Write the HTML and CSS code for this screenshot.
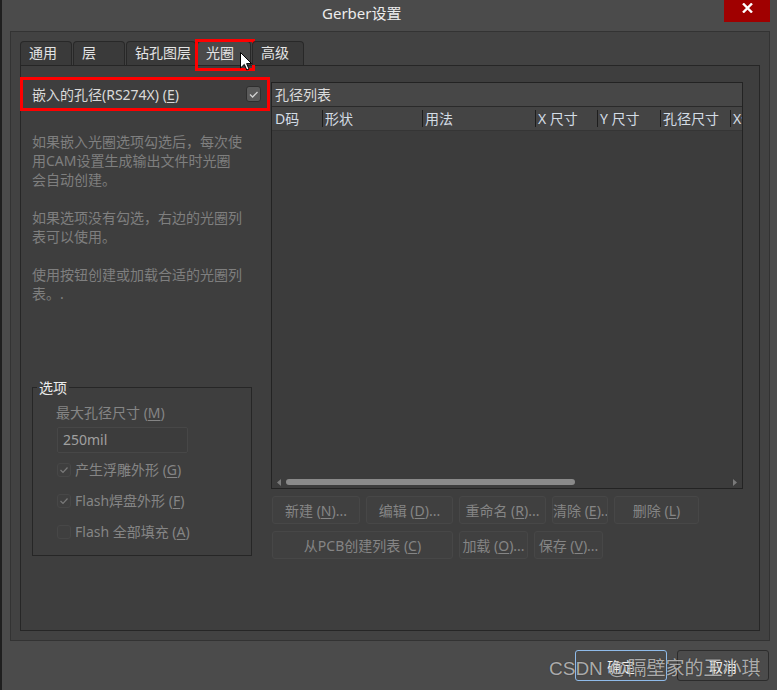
FILE: index.html
```html
<!DOCTYPE html>
<html lang="zh-CN">
<head>
<meta charset="utf-8">
<title>Gerber设置</title>
<link rel="stylesheet" href="styles.css">
</head>
<body>
<div class="window">
  <header class="titlebar">
    <span class="title">Gerber设置</span>
    <button class="close" aria-label="关闭">
      <svg width="11" height="10" viewBox="0 0 11 10"><path d="M1 0.5 L10 9.5 M10 0.5 L1 9.5" stroke="#fff" stroke-width="2.4" fill="none"/></svg>
    </button>
  </header>

  <div class="outer">
    <nav class="tabs">
      <span class="tab w52">通用</span>
      <span class="tab w52">层</span>
      <span class="tab w70">钻孔图层</span>
      <span class="tab w54 active">光圈<span class="annot"></span></span>
      <span class="tab w52">高级</span>
    </nav>

    <section class="page">
      <div class="left">
        <div class="embed">
          <span>嵌入的孔径(RS274X) (<u>E</u>)</span>
          <span class="cb cb-main"><svg width="11" height="9" viewBox="0 0 11 9"><path d="M2 4.5 L4.6 7 L9.5 2" stroke="#d2d2d2" stroke-width="1.3" fill="none"/></svg></span>
        </div>
        <div class="desc">
          <p>如果嵌入光圈选项勾选后，每次使<br>用CAM设置生成输出文件时光圈<br>会自动创建。</p>
          <p>如果选项没有勾选，右边的光圈列<br>表可以使用。</p>
          <p>使用按钮创建或加载合适的光圈列<br>表。.</p>
        </div>
        <div class="options">
          <div class="group-title">选项</div>
          <div class="opt-label">最大孔径尺寸 (<u>M</u>)</div>
          <div class="field">250mil</div>
          <div class="check-row first"><span class="cb cb-dis"><svg width="10" height="8" viewBox="0 0 10 8"><path d="M1.5 4 L4 6.5 L8.5 1.5" stroke="#7a7a7a" stroke-width="1.2" fill="none"/></svg></span><span>产生浮雕外形 (<u>G</u>)</span></div>
          <div class="check-row"><span class="cb cb-dis"><svg width="10" height="8" viewBox="0 0 10 8"><path d="M1.5 4 L4 6.5 L8.5 1.5" stroke="#7a7a7a" stroke-width="1.2" fill="none"/></svg></span><span>Flash焊盘外形 (<u>F</u>)</span></div>
          <div class="check-row"><span class="cb cb-dis"></span><span>Flash 全部填充 (<u>A</u>)</span></div>
        </div>
      </div>

      <div class="right">
        <div class="list">
          <div class="list-title">孔径列表</div>
          <div class="list-head">
            <span class="col c1">D码</span>
            <span class="col c2">形状</span>
            <span class="col c3">用法</span>
            <span class="col c4">X 尺寸</span>
            <span class="col c5">Y 尺寸</span>
            <span class="col c6">孔径尺寸</span>
            <span class="col c7">X偏移</span>
          </div>
          <div class="list-body"></div>
          <div class="hscroll">
            <svg class="arr-l" width="4" height="7" viewBox="0 0 4 7"><path d="M4 0 L0 3.5 L4 7 Z" fill="#7a7a7a"/></svg>
            <span class="thumb"></span>
            <svg class="arr-r" width="4" height="7" viewBox="0 0 4 7"><path d="M0 0 L4 3.5 L0 7 Z" fill="#7a7a7a"/></svg>
          </div>
        </div>
        <div class="btn-row">
          <button class="btn b88">新建 (<u>N</u>)...</button>
          <button class="btn b87">编辑 (<u>D</u>)...</button>
          <button class="btn b87">重命名 (<u>R</u>)...</button>
          <button class="btn b56">清除 (<u>E</u>)..</button>
          <button class="btn b85">删除 (<u>L</u>)</button>
        </div>
        <div class="btn-row">
          <button class="btn b181">从PCB创建列表 (<u>C</u>)</button>
          <button class="btn b69">加载 (<u>O</u>)...</button>
          <button class="btn b69">保存 (<u>V</u>)...</button>
        </div>
      </div>
    </section>
  </div>

  <footer class="footer">
    <button class="dlg-btn ok">确定</button>
    <button class="dlg-btn">取消</button>
  </footer>

  <div class="watermark">CSDN @隔壁家的王小琪</div>

  <svg class="cursor" width="13" height="19" viewBox="0 0 13 19"><path d="M0.5 0.5 L0.5 16 L4.3 12.4 L6.8 18 L9 17 L6.6 11.6 L11.6 11.6 Z" fill="#fff" stroke="#000" stroke-width="1"/></svg>
</div>
</body>
</html>
```

FILE: styles.css
```css
body {
  margin: 0;
  background: #4b4b4b;
  font-family: "Noto Sans", "Noto Sans CJK SC", sans-serif;
  font-size: 14px;
}

u { text-decoration-thickness: 1px; text-underline-offset: 2px; }

.window {
  position: relative;
  width: 777px;
  height: 690px;
  box-sizing: border-box;
  border-left: 2px solid #1f1f1f;
  background: #4b4b4b;
  overflow: hidden;
}

/* title bar */
.titlebar {
  height: 31px;
  display: flex;
  align-items: flex-start;
}
.title {
  margin-left: 320px;
  margin-top: 3px;
  font-size: 15px;
  line-height: 20px;
  color: #ececec;
}
.close {
  margin-left: auto;
  margin-right: 7px;
  width: 46px;
  height: 22px;
  border: 0;
  padding: 3px 0 0;
  background: #a00000;
  display: flex;
  justify-content: center;
  align-items: flex-start;
}

/* outer panel */
.outer {
  margin-left: 8px;
  width: 760px;
  height: 610px;
  box-sizing: border-box;
  border: 1px solid #333;
  background: #424242;
  padding: 9px 9px 9px 9px;
  display: flex;
  flex-direction: column;
}

.tabs {
  display: flex;
  gap: 1px;
  height: 24px;
}
.tab {
  position: relative;
  box-sizing: border-box;
  height: 24px;
  border: 1px solid #282828;
  border-bottom: 0;
  border-radius: 4px 4px 0 0;
  background: #3a3a3a;
  color: #e4e4e4;
  padding-left: 8px;
  line-height: 22px;
}
.tab.active { background: #4a4a4a; }
.w52 { width: 52px; }
.w54 { width: 54px; }
.w70 { width: 70px; }
.annot {
  position: absolute;
  left: -3px;
  top: -3px;
  width: 60px;
  height: 32px;
  box-sizing: border-box;
  border: 3px solid #f00;
}

.page {
  flex: 1;
  border: 1px solid #262626;
  background: #3e3e3e;
  display: grid;
  grid-template-columns: 250px 472px;
  align-content: start;
}

/* left column */
.embed {
  margin: 14px 4px 0 2px;
  height: 28px;
  display: flex;
  align-items: center;
  justify-content: space-between;
  padding: 0 6px 0 9px;
  outline: 3px solid #f00;
  color: #dadada;
}

.cb {
  box-sizing: border-box;
  display: grid;
  place-items: center;
  border-radius: 3px;
}
.cb-main {
  width: 15px;
  height: 16px;
  border: 1px solid #2f2f2f;
  background: #5a5a5a;
}
.cb-dis {
  width: 14px;
  height: 14px;
  border: 1px solid #474747;
  background: #3f3f3f;
}

.desc {
  margin: 24px 0 0 11px;
  color: #7f7f7f;
  line-height: 19px;
}
.desc p { margin: 0 0 19px; }
.desc p:last-child { margin-bottom: 0; }

.options {
  margin: 84px 0 0 11px;
  width: 220px;
  box-sizing: border-box;
  border: 1px solid #262626;
  padding: 0 0 13px 23px;
  color: #858585;
}
.group-title {
  width: fit-content;
  margin: -10px 0 0 -19px;
  padding: 0 2px;
  line-height: 20px;
  background: #3e3e3e;
  color: #ececec;
}
.opt-label {
  margin-top: 5px;
  line-height: 20px;
}
.field {
  margin: 4px 0 0 1px;
  width: 131px;
  height: 26px;
  box-sizing: border-box;
  border: 1px solid #474747;
  border-radius: 2px;
  background: #3c3c3c;
  color: #a0a0a0;
  padding-left: 5px;
  line-height: 24px;
}
.check-row {
  margin: 11px 0 0 1px;
  height: 20px;
  display: flex;
  align-items: center;
  gap: 4px;
  line-height: 20px;
}
.check-row.first { margin-top: 7px; }

/* right column */
.list {
  margin-top: 16px;
  height: 407px;
  box-sizing: border-box;
  border: 1px solid #232323;
  background: #3c3c3c;
  display: flex;
  flex-direction: column;
}
.list-title {
  height: 23px;
  background: #474747;
  border-bottom: 1px solid #2a2a2a;
  padding-left: 3px;
  line-height: 23px;
  color: #dcdcdc;
}
.list-head {
  height: 23px;
  background: #444;
  border-bottom: 1px solid #353535;
  display: flex;
  align-items: center;
  overflow: hidden;
  color: #d4dde6;
}
.col {
  flex: none;
  box-sizing: border-box;
  height: 17px;
  line-height: 17px;
  padding-left: 2px;
  border-left: 1px solid #1e1e1e;
  white-space: nowrap;
  overflow: hidden;
}
.c1 { width: 50px; border-left: 0; padding-left: 3px; }
.c2 { width: 100px; }
.c3 { width: 113px; }
.c4 { width: 62px; }
.c5 { width: 63px; }
.c6 { width: 70px; }
.c7 { flex: 1; }
.list-body { flex: 1; }
.hscroll {
  height: 12px;
  display: flex;
  align-items: center;
}
.arr-l { margin-left: 5px; }
.thumb {
  margin-left: 5px;
  width: 289px;
  height: 6px;
  border-radius: 3px;
  background: #8a8a8a;
}
.arr-r { margin-left: auto; margin-right: 5px; }

.btn-row {
  display: flex;
  gap: 6px;
  margin: 7px 0 0 1px;
}
.btn {
  height: 28px;
  box-sizing: border-box;
  border: 1px solid #474747;
  border-radius: 3px;
  background: #404040;
  color: #858585;
  font: inherit;
  padding: 0;
  white-space: nowrap;
  overflow: hidden;
  text-align: center;
}
.b88 { width: 88px; }
.b87 { width: 87px; }
.b56 { width: 56px; }
.b85 { width: 85px; }
.b181 { width: 181px; }
.b69 { width: 69px; }

/* dialog buttons */
.footer {
  display: flex;
  justify-content: flex-end;
  gap: 10px;
  margin: 9px 8px 0 0;
}
.dlg-btn {
  width: 92px;
  height: 31px;
  box-sizing: border-box;
  border: 1px solid #2c2c2c;
  border-radius: 3px;
  background: #4b4b4b;
  color: #f2f2f2;
  font: inherit;
  padding: 0;
}
.dlg-btn.ok { border-color: #8fbbea; }

.watermark {
  position: absolute;
  left: 547px;
  top: 656px;
  font-family: "Liberation Sans", "Noto Sans CJK SC", sans-serif;
  font-size: 19px;
  line-height: 26px;
  color: rgba(225, 225, 225, 0.72);
  text-shadow: 0 0 1px rgba(0, 0, 0, 0.6);
  white-space: nowrap;
}

.cursor {
  position: absolute;
  left: 238px;
  top: 52px;
}
```
